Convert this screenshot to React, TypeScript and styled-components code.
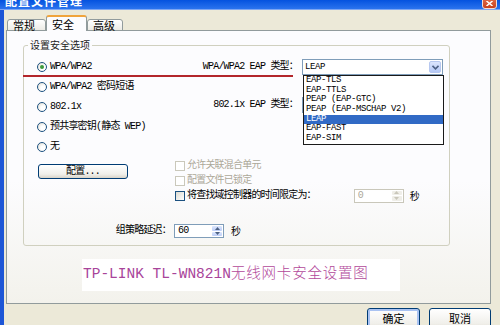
import styled, { createGlobalStyle } from 'styled-components'

const UI = `'Liberation Mono', 'Noto Sans CJK SC', monospace`
const CJK = `'Noto Sans CJK SC', 'Liberation Sans', sans-serif`

const Global = createGlobalStyle`
  html, body { margin: 0; padding: 0; background: #ece9d8; }
  body { font-family: ${UI}; }
`

const Window = styled.div`
  width: 500px;
  height: 325px;
  overflow: hidden;
  display: flex;
  flex-direction: column;
  background: #ece9d8;
`

const TitleBar = styled.div`
  height: 9px;
  flex: none;
  display: flex;
  align-items: flex-end;
  justify-content: space-between;
  padding: 0 3px 0 5px;
  overflow: hidden;
  background: linear-gradient(#0452df, #2a73ee);
  border-bottom: 1px solid #7ea6f2;
`

const TitleText = styled.div`
  font: bold 12px/14px ${CJK};
  color: #fff;
  letter-spacing: 1px;
  margin-bottom: 1px;
`

const CloseBtn = styled.div`
  width: 15px;
  height: 14px;
  flex: none;
  box-sizing: border-box;
  border: 1px solid #f4ddd4;
  border-radius: 3px;
  background: linear-gradient(#e77858, #c8401d);
  display: flex;
  align-items: flex-end;
  justify-content: center;
  padding-bottom: 2px;
`

const Body = styled.div`
  flex: 1;
  display: flex;
  flex-direction: column;
  border-left: 4px solid #1d56d6;
  padding: 5px 9px 0 2px;
`

const TabStrip = styled.div`
  display: flex;
  align-items: flex-end;
  height: 16px;
  padding-left: 1px;
  margin-bottom: -1px;
  position: relative;
  z-index: 1;
`

const Tab = styled.div<{ $active?: boolean; $w: number }>`
  width: ${p => p.$w}px;
  height: ${p => (p.$active ? 16 : 12)}px;
  box-sizing: border-box;
  border: 1px solid #919b9c;
  border-bottom: ${p => (p.$active ? 'none' : '1px solid #919b9c')};
  border-top: ${p => (p.$active ? '2px solid #f0a43c' : '1px solid #919b9c')};
  border-radius: 3px 3px 0 0;
  background: ${p => (p.$active ? '#fcfcfe' : 'linear-gradient(#ffffff, #ecebe5)')};
  font: 11px/12px ${CJK};
  color: #000;
  display: flex;
  align-items: center;
  padding-left: 5px;
`

const Panel = styled.div`
  height: 274px;
  box-sizing: border-box;
  border: 1px solid #919b9c;
  background: linear-gradient(#fcfcfe 55%, #f3f2ec);
  display: flex;
  flex-direction: column;
  align-items: flex-start;
`

const Group = styled.fieldset`
  align-self: stretch;
  margin: 8px 40px 0 16px;
  padding: 6px 6px 7px 13px;
  border: 1px solid #d0d0bf;
  border-radius: 3px;
  min-width: 0;
`

const Legend = styled.legend`
  font: 10px/12px ${CJK};
  color: #222;
  padding: 0 2px;
  margin-left: -9px;
`

const TopGrid = styled.div`
  position: relative;
  display: grid;
  grid-template-columns: 1fr auto;
  grid-auto-rows: 20px;
  align-items: center;
`

const RedMark = styled.div`
  position: absolute;
  left: -14px;
  top: 18px;
  width: 270px;
  height: 2px;
  background: #b3262b;
`

const Text = styled.span<{ $dim?: boolean }>`
  font: 10px/12px ${UI};
  letter-spacing: -0.8px;
  color: ${p => (p.$dim ? '#aca899' : '#000')};
  white-space: nowrap;
`

const RadioRow = styled.div<{ $row: number }>`
  grid-column: 1;
  grid-row: ${p => p.$row};
  display: flex;
  align-items: center;
  gap: 3px;
`

const Radio = styled.span<{ $on?: boolean }>`
  width: 10px;
  height: 10px;
  flex: none;
  box-sizing: border-box;
  border-radius: 50%;
  border: 1px solid #1c5180;
  background: radial-gradient(circle at 65% 65%, #ffffff 30%, #dcdad0);
  display: flex;
  align-items: center;
  justify-content: center;
  &::after {
    content: '';
    display: ${p => (p.$on ? 'block' : 'none')};
    width: 4px;
    height: 4px;
    border-radius: 50%;
    background: #3c9a3c;
  }
`

const FieldRow = styled.div<{ $row: number }>`
  grid-column: 2;
  grid-row: ${p => p.$row};
  align-self: ${p => (p.$row === 1 ? 'center' : 'start')};
  display: flex;
  align-items: center;
  justify-content: flex-end;
  gap: 4px;
`

const Select = styled.div`
  position: relative;
  width: 141px;
  height: 16px;
  box-sizing: border-box;
  border: 1px solid #7f9db9;
  background: #fff;
  display: flex;
  align-items: center;
  justify-content: space-between;
  padding: 1px 1px 1px 2px;
`

const SelectValue = styled.span`
  font: 9px/10px ${UI};
  letter-spacing: -0.4px;
  color: #000;
`

const ArrowBtn = styled.span`
  width: 12px;
  height: 12px;
  box-sizing: border-box;
  border: 1px solid #b7c8f0;
  border-radius: 2px;
  background: linear-gradient(#dce6fd, #b4c8f6);
  display: flex;
  align-items: center;
  justify-content: center;
`

const DropList = styled.div`
  position: absolute;
  left: 0;
  top: 15px;
  width: 141px;
  box-sizing: border-box;
  border: 1px solid #1a1a1a;
  background: #fff;
  z-index: 3;
`

const Option = styled.div<{ $sel?: boolean }>`
  height: 9.7px;
  font: 9px/9.7px ${UI};
  letter-spacing: -0.4px;
  padding-left: 2px;
  color: ${p => (p.$sel ? '#fff' : '#000')};
  background: ${p => (p.$sel ? '#316ac5' : 'transparent')};
  white-space: pre;
`

const BottomGrid = styled.div`
  display: grid;
  grid-template-columns: 138px 1fr;
  margin-top: 1px;
`

const ConfigBtn = styled.div`
  width: 90px;
  height: 15px;
  box-sizing: border-box;
  margin: 6px 0 0 1px;
  border: 1px solid #003c74;
  border-radius: 3px;
  background: linear-gradient(#ffffff, #f0efea 70%, #d9d4c8);
  display: flex;
  align-items: center;
  justify-content: center;
`

const CheckCol = styled.div`
  display: flex;
  flex-direction: column;
`

const CheckRow = styled.div`
  height: 15px;
  display: flex;
  align-items: center;
  gap: 2px;
`

const Check = styled.span<{ $dim?: boolean }>`
  width: 10px;
  height: 10px;
  flex: none;
  box-sizing: border-box;
  border: 1px solid ${p => (p.$dim ? '#cac8bb' : '#1c5180')};
  background: ${p => (p.$dim ? '#fff' : 'linear-gradient(135deg, #dcdad0, #ffffff)')};
`

const Spin = styled.div<{ $dim?: boolean; $gap?: number }>`
  width: 50px;
  height: 14px;
  box-sizing: border-box;
  margin-left: ${p => p.$gap ?? 0}px;
  border: 1px solid ${p => (p.$dim ? '#c9c7ba' : '#7f9db9')};
  background: #fff;
  display: flex;
  align-items: center;
  justify-content: space-between;
  padding: 1px 1px 1px 3px;
`

const SpinBtns = styled.div<{ $dim?: boolean }>`
  width: 10px;
  height: 10px;
  display: flex;
  flex-direction: column;
  gap: 1px;
  span {
    flex: 1;
    border-radius: 1px;
    background: ${p => (p.$dim ? '#efeee8' : 'linear-gradient(#dce6fd, #bccdf7)')};
    display: flex;
    align-items: center;
    justify-content: center;
  }
`

const Unit = styled.span<{ $gap?: number }>`
  font: 10px/12px ${CJK};
  color: #000;
  margin-left: ${p => p.$gap ?? 4}px;
`

const DelayLabel = styled.div`
  display: flex;
  justify-content: flex-end;
  align-items: center;
  padding-right: 4px;
  margin-top: 21px;
`

const DelayRow = styled.div`
  display: flex;
  align-items: center;
  margin: 21px 0 0 -1px;
`

const CaptionBox = styled.div`
  margin: 13px 0 0 75px;
  width: 318px;
  height: 32px;
  box-sizing: border-box;
  background: #fff;
  padding: 4px 0 0 1px;
  font: 14.5px/18px 'Liberation Mono', 'Noto Sans CJK SC', monospace;
  color: #a8449a;
  white-space: nowrap;
`

const CaptionCjk = styled.span`
  font-family: 'Noto Sans CJK SC', sans-serif;
  font-weight: 300;
  letter-spacing: 0.8px;
  color: #b2489a;
`

const ButtonRow = styled.div`
  display: flex;
  justify-content: flex-end;
  gap: 9px;
  margin-top: 4px;
`

const DlgBtn = styled.div<{ $default?: boolean; $w: number }>`
  width: ${p => p.$w}px;
  height: 23px;
  flex: none;
  box-sizing: border-box;
  border: 1px solid #003c74;
  border-radius: 3px;
  background: linear-gradient(#ffffff, #f0efea 70%, #d9d4c8);
  box-shadow: ${p => (p.$default ? 'inset 0 0 0 2px #aac3f2' : 'none')};
  font: 11px/12px ${CJK};
  color: #000;
  display: flex;
  align-items: flex-start;
  justify-content: center;
  padding-top: 3px;
`

const Chevron = () => (
  <svg width="7" height="5" viewBox="0 0 7 5">
    <path d="M0.5 0.8 L3.5 3.8 L6.5 0.8" fill="none" stroke="#4d6185" strokeWidth="1.6" />
  </svg>
)

const Tri = ({ up, color }: { up?: boolean; color: string }) => (
  <svg width="5" height="3" viewBox="0 0 5 3">
    <path d={up ? 'M0 3 L2.5 0 L5 3 Z' : 'M0 0 L5 0 L2.5 3 Z'} fill={color} />
  </svg>
)

const EAP_OPTIONS = [
  'EAP-TLS',
  'EAP-TTLS',
  'PEAP (EAP-GTC)',
  'PEAP (EAP-MSCHAP V2)',
  'LEAP',
  'EAP-FAST',
  'EAP-SIM',
]

const MODES = ['WPA/WPA2', 'WPA/WPA2 密码短语', '802.1x', '预共享密钥(静态 WEP)', '无']

export default function App() {
  return (
    <>
      <Global />
      <Window>
        <TitleBar>
          <TitleText>配置文件管理</TitleText>
          <CloseBtn>
            <svg width="7" height="5" viewBox="0 0 7 5">
              <path d="M0.5 0 L6.5 5 M6.5 0 L0.5 5" stroke="#fff" strokeWidth="1.5" />
            </svg>
          </CloseBtn>
        </TitleBar>

        <Body>
          <TabStrip>
            <Tab $w={39}>常规</Tab>
            <Tab $w={41} $active>安全</Tab>
            <Tab $w={36}>高级</Tab>
          </TabStrip>

          <Panel>
            <Group>
              <Legend>设置安全选项</Legend>

              <TopGrid>
                <RedMark />
                {MODES.map((m, i) => (
                  <RadioRow key={m} $row={i + 1}>
                    <Radio $on={i === 0} />
                    <Text>{m}</Text>
                  </RadioRow>
                ))}

                <FieldRow $row={1}>
                  <Text>WPA/WPA2 EAP 类型：</Text>
                  <Select>
                    <SelectValue>LEAP</SelectValue>
                    <ArrowBtn><Chevron /></ArrowBtn>
                    <DropList>
                      {EAP_OPTIONS.map(o => (
                        <Option key={o} $sel={o === 'LEAP'}>{o}</Option>
                      ))}
                    </DropList>
                  </Select>
                </FieldRow>

                <FieldRow $row={3}>
                  <Text>802.1x EAP 类型：</Text>
                  <Select>
                    <SelectValue />
                    <ArrowBtn><Chevron /></ArrowBtn>
                  </Select>
                </FieldRow>
              </TopGrid>

              <BottomGrid>
                <div>
                  <ConfigBtn><Text>配置...</Text></ConfigBtn>
                </div>
                <CheckCol>
                  <CheckRow>
                    <Check $dim />
                    <Text $dim>允许关联混合单元</Text>
                  </CheckRow>
                  <CheckRow>
                    <Check $dim />
                    <Text $dim>配置文件已锁定</Text>
                  </CheckRow>
                  <CheckRow>
                    <Check />
                    <Text>将查找域控制器的时间限定为：</Text>
                    <Spin $dim $gap={36}>
                      <Text $dim>0</Text>
                      <SpinBtns $dim>
                        <span><Tri up color="#c9c7ba" /></span>
                        <span><Tri color="#c9c7ba" /></span>
                      </SpinBtns>
                    </Spin>
                    <Unit>秒</Unit>
                  </CheckRow>
                </CheckCol>

                <DelayLabel>
                  <Text>组策略延迟：</Text>
                </DelayLabel>
                <DelayRow>
                  <Spin>
                    <Text>60</Text>
                    <SpinBtns>
                      <span><Tri up color="#4d6185" /></span>
                      <span><Tri color="#4d6185" /></span>
                    </SpinBtns>
                  </Spin>
                  <Unit $gap={7}>秒</Unit>
                </DelayRow>
              </BottomGrid>
            </Group>

            <CaptionBox>
              TP-LINK TL-WN821N<CaptionCjk>无线网卡安全设置图</CaptionCjk>
            </CaptionBox>
          </Panel>

          <ButtonRow>
            <DlgBtn $w={53} $default>确定</DlgBtn>
            <DlgBtn $w={62}>取消</DlgBtn>
          </ButtonRow>
        </Body>
      </Window>
    </>
  )
}
